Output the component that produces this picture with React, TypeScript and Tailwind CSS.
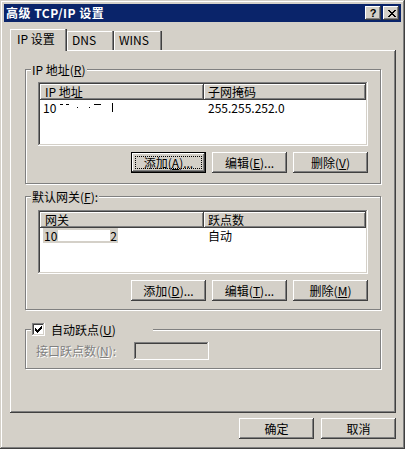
import type { ReactNode } from 'react';

// classic 3D edges
const raised = 'shadow-[inset_-1px_-1px_#404040,inset_1px_1px_#fff,inset_-2px_-2px_#808080]';
const sunken = 'shadow-[inset_-1px_-1px_#fff,inset_1px_1px_#808080,inset_-2px_-2px_#d4d0c8,inset_2px_2px_#404040]';

function U({ children }: { children: string }) {
  return <span className="underline underline-offset-[1px]">{children}</span>;
}

function Btn({ children, focused = false }: { children: ReactNode; focused?: boolean }) {
  return (
    <div
      className={`relative flex h-[21px] w-[75px] items-center justify-center bg-[#d4d0c8] leading-none ${
        focused
          ? 'shadow-[inset_0_0_0_1px_#000,inset_-2px_-2px_#404040,inset_2px_2px_#fff,inset_-3px_-3px_#808080]'
          : raised
      }`}
    >
      {focused && <span className="absolute inset-[4px] border border-dotted border-black" />}
      <span className="relative">{children}</span>
    </div>
  );
}

function GroupBox({ legend, className, children }: { legend: ReactNode; className: string; children: ReactNode }) {
  return (
    <div className={`relative border border-[#808080] shadow-[1px_1px_#fff,inset_1px_1px_#fff] ${className}`}>
      <div className="absolute -top-[7px] left-[5px] flex h-[13px] items-center bg-[#d4d0c8] px-[1px] leading-none">
        {legend}
      </div>
      {children}
    </div>
  );
}

function ListBox({ head, row }: { head: [ReactNode, ReactNode]; row: [ReactNode, ReactNode] }) {
  return (
    <div className={`h-[64px] w-[330px] bg-white p-[2px] ${sunken}`}>
      <div className="flex h-[16px]">
        <div className={`flex w-[164px] items-center bg-[#d4d0c8] pl-[5px] leading-none ${raised}`}>{head[0]}</div>
        <div className={`flex w-[162px] items-center bg-[#d4d0c8] pl-[4px] leading-none ${raised}`}>{head[1]}</div>
      </div>
      <div className="flex h-[15px] items-center leading-none">
        <div className="flex w-[164px] items-center pl-[3px]">{row[0]}</div>
        <div className="flex w-[162px] items-center pl-[4px]">{row[1]}</div>
      </div>
    </div>
  );
}

function CheckMark() {
  const cols = [2, 3, 4, 3, 2, 1, 0];
  return (
    <svg width="7" height="7" viewBox="0 0 7 7" shapeRendering="crispEdges">
      {cols.map((y, x) => (
        <rect key={x} x={x} y={y} width="1" height="3" fill="#000" />
      ))}
    </svg>
  );
}

function CloseGlyph() {
  const px: [number, number, number][] = [
    [0, 0, 2], [6, 0, 2], [1, 1, 2], [5, 1, 2], [2, 2, 4], [3, 3, 2], [2, 4, 4], [1, 5, 2], [5, 5, 2], [0, 6, 2], [6, 6, 2],
  ];
  return (
    <svg width="8" height="7" viewBox="0 0 8 7" shapeRendering="crispEdges">
      {px.map(([x, y, w], i) => (
        <rect key={i} x={x} y={y} width={w} height="1" fill="#000" />
      ))}
    </svg>
  );
}

function Tab({ label, active = false, w }: { label: string; active?: boolean; w: string }) {
  return (
    <div
      className={`flex items-start bg-[#d4d0c8] shadow-[inset_-1px_0_#404040,inset_-2px_0_#808080,inset_1px_1px_#fff] ${w} ${
        active ? 'relative z-10 -mb-px h-[22px] pl-[7px] pt-[4px]' : 'h-[19px] pl-[5px] pt-[3px]'
      }`}
    >
      <span className="leading-[12px]">{label}</span>
    </div>
  );
}

export default function App() {
  return (
    <div className="h-[452px] w-[408px] bg-white font-['Noto_Sans_CJK_SC',sans-serif] text-[12px] text-black">
      <div className="flex h-[449px] w-[405px] flex-col bg-[#d4d0c8] p-[4px] shadow-[inset_-1px_-1px_#404040,inset_1px_1px_#d4d0c8,inset_-2px_-2px_#808080,inset_2px_2px_#fff]">
        {/* title bar */}
        <div className="flex h-[18px] items-center bg-[#0a246a] pl-[2px] pr-[2px]">
          <span className="text-[12px] font-bold leading-none tracking-[0.5px] text-white">高级 TCP/IP 设置</span>
          <div className="ml-auto flex gap-[2px]">
            <div className={`flex h-[14px] w-[16px] items-center justify-center bg-[#d4d0c8] ${raised}`}>
              <span className="font-['Liberation_Sans',sans-serif] text-[11px] font-bold leading-none">?</span>
            </div>
            <div className={`flex h-[14px] w-[16px] items-center justify-center bg-[#d4d0c8] pl-px ${raised}`}>
              <CloseGlyph />
            </div>
          </div>
        </div>

        <div className="ml-[6px] mt-[7px] flex w-[386px] flex-col">
          {/* tabs */}
          <div className="flex h-[21px] items-end">
            <Tab label="IP 设置" active w="w-[57px]" />
            <Tab label="DNS" w="w-[47px]" />
            <Tab label="WINS" w="w-[48px]" />
          </div>

          {/* tab page */}
          <div className={`flex h-[363px] flex-col px-[15px] pt-[19px] shadow-[inset_-1px_-1px_#404040,inset_1px_1px_#fff,inset_-2px_-2px_#808080]`}>
            <GroupBox
              className="h-[115px] px-[12px] pt-[12px]"
              legend={
                <span>
                  IP 地址(<U>R</U>)
                </span>
              }
            >
              <ListBox
                head={['IP 地址', '子网掩码']}
                row={[
                  <span className="flex items-center">
                    10
                    <span className="ml-[4px] inline-block h-px w-[3px] -translate-y-[3px] bg-black" />
                    <span className="ml-[3px] inline-block h-px w-[3px] -translate-y-[3px] bg-black" />
                    <span className="ml-[8px] inline-block h-px w-px bg-black" />
                    <span className="ml-[11px] inline-block h-px w-px bg-black" />
                    <span className="ml-[4px] inline-block h-px w-[7px] -translate-y-[3px] bg-black" />
                    <span className="ml-[11px] inline-block h-[9px] w-px bg-black" />
                  </span>,
                  '255.255.252.0',
                ]}
              />
              <div className="mt-[6px] flex justify-end gap-[6px]">
                <Btn focused>
                  添加(<U>A</U>)...
                </Btn>
                <Btn>
                  编辑(<U>E</U>)...
                </Btn>
                <Btn>
                  删除(<U>V</U>)
                </Btn>
              </div>
            </GroupBox>

            <GroupBox
              className="mt-[12px] h-[114px] px-[12px] pt-[13px]"
              legend={
                <span>
                  默认网关(<U>F</U>):
                </span>
              }
            >
              <ListBox
                head={['网关', '跃点数']}
                row={[
                  <span className="flex h-[15px] w-[75px] items-center bg-[#d4d0c8] pl-px">
                    10
                    <span className="ml-[1px] inline-block h-[11px] w-[52px] bg-white" />
                    2
                  </span>,
                  '自动',
                ]}
              />
              <div className="mt-[6px] flex justify-end gap-[6px]">
                <Btn>
                  添加(<U>D</U>)...
                </Btn>
                <Btn>
                  编辑(<U>T</U>)...
                </Btn>
                <Btn>
                  删除(<U>M</U>)
                </Btn>
              </div>
            </GroupBox>

            <GroupBox
              className="mt-[19px] h-[40px] pl-[10px] pt-[12px]"
              legend={
                <span className="flex w-[120px] items-center">
                  <span className={`flex h-[13px] w-[13px] items-center justify-center bg-white ${sunken}`}>
                    <CheckMark />
                  </span>
                  <span className="ml-[6px]">
                    自动跃点(<U>U</U>)
                  </span>
                </span>
              }
            >
              <div className="flex items-center">
                <span className="w-[98px] text-[#808080] [text-shadow:1px_1px_#fff]">
                  接口跃点数(<U>N</U>):
                </span>
                <div className={`h-[18px] w-[75px] bg-[#d4d0c8] ${sunken}`} />
              </div>
            </GroupBox>
          </div>

          {/* dialog buttons */}
          <div className="mt-[5px] flex justify-end gap-[7px]">
            <Btn>确定</Btn>
            <Btn>取消</Btn>
          </div>
        </div>
      </div>
    </div>
  );
}
